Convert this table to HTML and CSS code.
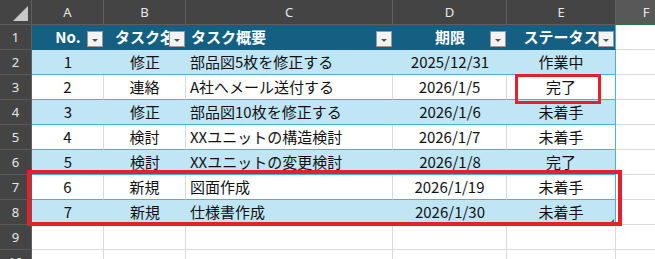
FILE: index.html
```html
<!DOCTYPE html>
<html lang="ja">
<head>
<meta charset="utf-8">
<link rel="stylesheet" href="styles.css">
</head>
<body>
<div class="sheet">
  <div class="corner"><span class="tri"></span></div>
  <div class="ch">A</div><div class="ch">B</div><div class="ch">C</div><div class="ch">D</div><div class="ch">E</div><div class="ch ch-sel">F</div>

  <div class="rh">1</div>
  <div class="c th ctr">No.<span class="flt"></span></div>
  <div class="c th ctr">タスク名<span class="flt"></span></div>
  <div class="c th lft">タスク概要<span class="flt"></span></div>
  <div class="c th ctr">期限<span class="flt"></span></div>
  <div class="c th ctr last">ステータス<span class="flt"></span></div>
  <div class="c f"></div>

  <div class="rh">2</div>
  <div class="c band ctr">1</div><div class="c band ctr">修正</div><div class="c band lft">部品図5枚を修正する</div><div class="c band ctr">2025/12/31</div><div class="c band ctr last">作業中</div><div class="c f"></div>

  <div class="rh">3</div>
  <div class="c row ctr">2</div><div class="c row ctr">連絡</div><div class="c row lft">A社へメール送付する</div><div class="c row ctr">2026/1/5</div><div class="c row ctr last">完了</div><div class="c f"></div>

  <div class="rh">4</div>
  <div class="c band ctr">3</div><div class="c band ctr">修正</div><div class="c band lft">部品図10枚を修正する</div><div class="c band ctr">2026/1/6</div><div class="c band ctr last">未着手</div><div class="c f"></div>

  <div class="rh">5</div>
  <div class="c row ctr">4</div><div class="c row ctr">検討</div><div class="c row lft">XXユニットの構造検討</div><div class="c row ctr">2026/1/7</div><div class="c row ctr last">未着手</div><div class="c f"></div>

  <div class="rh">6</div>
  <div class="c band ctr">5</div><div class="c band ctr">検討</div><div class="c band lft">XXユニットの変更検討</div><div class="c band ctr">2026/1/8</div><div class="c band ctr last">完了</div><div class="c f"></div>

  <div class="rh">7</div>
  <div class="c row ctr">6</div><div class="c row ctr">新規</div><div class="c row lft">図面作成</div><div class="c row ctr">2026/1/19</div><div class="c row ctr last">未着手</div><div class="c f"></div>

  <div class="rh">8</div>
  <div class="c band ctr">7</div><div class="c band ctr">新規</div><div class="c band lft">仕様書作成</div><div class="c band ctr">2026/1/30</div><div class="c band ctr last">未着手<span class="handle"></span></div><div class="c f"></div>

  <div class="rh">9</div>
  <div class="c e"></div><div class="c e"></div><div class="c e"></div><div class="c e"></div><div class="c e"></div><div class="c f"></div>

  <div class="rh">10</div>
  <div class="c e"></div><div class="c e"></div><div class="c e"></div><div class="c e"></div><div class="c e"></div><div class="c f"></div>

  <div class="mark mark-done"></div>
  <div class="mark mark-new"></div>
</div>
</body>
</html>
```

FILE: styles.css
```css
* { box-sizing: border-box; }
html, body { margin: 0; padding: 0; background: #ffffff; }
body { width: 655px; height: 259px; overflow: hidden; }

.sheet {
  position: relative;
  display: grid;
  grid-template-columns: 32px 72px 82px 207px 114px 109px 60px;
  grid-template-rows: 25px repeat(10, 25px);
  font-family: "Noto Sans CJK JP", "Noto Sans", sans-serif;
  font-size: 15px;
  color: #111111;
}

.corner {
  position: relative;
  background: #444444;
  border-right: 1px solid #5e5e5e;
  border-bottom: 1px solid #5e5e5e;
}
.corner .tri {
  position: absolute;
  right: 3px;
  bottom: 3px;
  width: 0;
  height: 0;
  border-left: 15px solid transparent;
  border-bottom: 15px solid #c9c9c9;
}

.ch {
  background: #444444;
  color: #e8e8e8;
  font-family: "Noto Sans", "Liberation Sans", sans-serif;
  font-size: 13px;
  display: flex;
  align-items: center;
  justify-content: center;
  border-right: 1px solid #5e5e5e;
  border-bottom: 1px solid #5e5e5e;
}
.ch-sel {
  background: #585858;
  border-right: none;
  border-bottom: 2px solid #1f7a45;
}

.rh {
  background: #444444;
  color: #e8e8e8;
  font-family: "Noto Sans", "Liberation Sans", sans-serif;
  font-size: 13px;
  display: flex;
  align-items: center;
  justify-content: center;
  border-right: 1px solid #5e5e5e;
  border-bottom: 1px solid #5a5a5a;
}

.c {
  position: relative;
  display: flex;
  align-items: center;
  white-space: nowrap;
  overflow: hidden;
  line-height: 24px;
}
.ctr { justify-content: center; }
.lft { justify-content: flex-start; padding-left: 4px; }

.th {
  background: #156082;
  color: #ffffff;
  font-weight: 700;
  border-bottom: 1px solid #156082;
  overflow: visible;
}
.th.lft { padding-left: 5px; }

.band {
  background: #c0e6f5;
  border-bottom: 1px solid #44b3e1;
}
.row {
  background: #ffffff;
  border-right: 1px solid #d9d9d9;
  border-bottom: 1px solid #44b3e1;
}
.last { border-right: 1px solid #44b3e1; }
.row.last { border-right: 1px solid #44b3e1; }

.e {
  background: #ffffff;
  border-right: 1px solid #dadada;
  border-bottom: 1px solid #dadada;
}
.f {
  background: #ffffff;
  border-bottom: 1px solid #dadada;
}

.flt {
  position: absolute;
  right: 1px;
  bottom: 2px;
  width: 16px;
  height: 16px;
  background: #f3f3f3;
  border: 1px solid #9a9a9a;
  z-index: 2;
}
.flt::after {
  content: "";
  position: absolute;
  left: 4px;
  top: 7px;
  width: 0;
  height: 0;
  border-left: 3px solid transparent;
  border-right: 3px solid transparent;
  border-top: 3px solid #555555;
}

.handle {
  position: absolute;
  right: 1px;
  bottom: 1px;
  width: 0;
  height: 0;
  border-left: 4px solid transparent;
  border-bottom: 4px solid #3a4f9a;
}

.mark {
  position: absolute;
  border: 3px solid #e3202b;
  z-index: 5;
}
.mark-done { left: 515px; top: 74px; width: 86px; height: 30px; }
.mark-new { left: 27px; top: 170px; width: 595px; height: 56px; border-width: 4px; }
```
